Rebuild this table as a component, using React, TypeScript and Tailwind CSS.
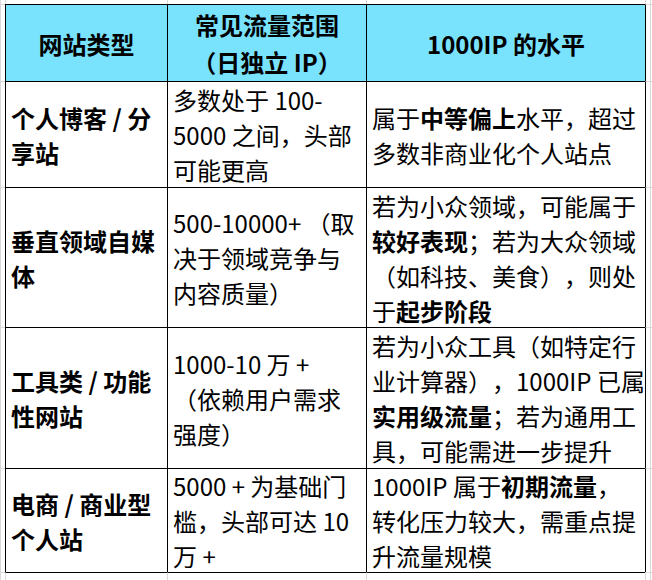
import type { ReactNode } from "react";
import clsx from "clsx";

type Row = { type: string[]; range: string[]; level: ReactNode };

const header = [["网站类型"], ["常见流量范围", "（日独立 IP）"], ["1000IP 的水平"]];

const rows: Row[] = [
  {
    type: ["个人博客 / 分", "享站"],
    range: ["多数处于 100-", "5000 之间，头部", "可能更高"],
    level: (
      <>
        <div>
          属于<b>中等偏上</b>水平，超过
        </div>
        <div>多数非商业化个人站点</div>
      </>
    ),
  },
  {
    type: ["垂直领域自媒", "体"],
    range: ["500-10000+ （取", "决于领域竞争与", "内容质量）"],
    level: (
      <>
        <div>若为小众领域，可能属于</div>
        <div>
          <b>较好表现</b>；若为大众领域
        </div>
        <div>（如科技、美食），则处</div>
        <div>
          于<b>起步阶段</b>
        </div>
      </>
    ),
  },
  {
    type: ["工具类 / 功能", "性网站"],
    range: ["1000-10 万 +", "（依赖用户需求", "强度）"],
    level: (
      <>
        <div>若为小众工具（如特定行</div>
        <div>业计算器），1000IP 已属</div>
        <div>
          <b>实用级流量</b>；若为通用工
        </div>
        <div>具，可能需进一步提升</div>
      </>
    ),
  },
  {
    type: ["电商 / 商业型", "个人站"],
    range: ["5000 + 为基础门", "槛，头部可达 10", "万 +"],
    level: (
      <>
        <div>
          1000IP 属于<b>初期流量</b>，
        </div>
        <div>转化压力较大，需重点提</div>
        <div>升流量规模</div>
      </>
    ),
  },
];

// spreadsheet grid: 6 columns x 7 rows, outer strips hold the faint gridlines
function gridLines(r: number, c: number) {
  const tableRow = r >= 1 && r <= 5;
  const leftBlack = tableRow && c >= 1 && c <= 4;
  const topBlack = r >= 1 && c >= 1 && c <= 3;
  return clsx(
    "border-l",
    leftBlack ? "border-l-black" : "border-l-[#d9d9d9]",
    r === 0 ? "" : "border-t",
    r === 0 ? "" : topBlack ? "border-t-black" : "border-t-[#d9d9d9]"
  );
}

function content(r: number, c: number): ReactNode {
  if (r === 1 && c >= 1 && c <= 3) {
    return (
      <div className="flex h-full flex-col items-center justify-center bg-[#79e2fd] font-bold leading-[37px]">
        {header[c - 1].map((line) => (
          <div key={line} className="whitespace-nowrap">
            {line}
          </div>
        ))}
      </div>
    );
  }
  if (r >= 2 && r <= 5 && c >= 1 && c <= 3) {
    const row = rows[r - 2];
    return (
      <div
        className={clsx(
          "flex h-full flex-col justify-center whitespace-nowrap pl-[5px] leading-[35px]",
          c === 1 && "font-bold"
        )}
      >
        {c === 1 && row.type.map((line) => <div key={line}>{line}</div>)}
        {c === 2 && row.range.map((line) => <div key={line}>{line}</div>)}
        {c === 3 && row.level}
      </div>
    );
  }
  return null;
}

export default function App() {
  const cells: ReactNode[] = [];
  for (let r = 0; r < 7; r++) {
    for (let c = 0; c < 6; c++) {
      cells.push(
        <div key={`${r}-${c}`} className={clsx("overflow-hidden", gridLines(r, c))}>
          {content(r, c)}
        </div>
      );
    }
  }
  return (
    <div className="grid h-[580px] w-[652px] grid-cols-[5px_162px_199px_279px_5px_2px] grid-rows-[4px_77px_106px_140px_141px_104px_8px] bg-white font-['Noto_Sans_CJK_SC',sans-serif] text-[24px] text-black [text-spacing-trim:space-all]">
      {cells}
    </div>
  );
}
